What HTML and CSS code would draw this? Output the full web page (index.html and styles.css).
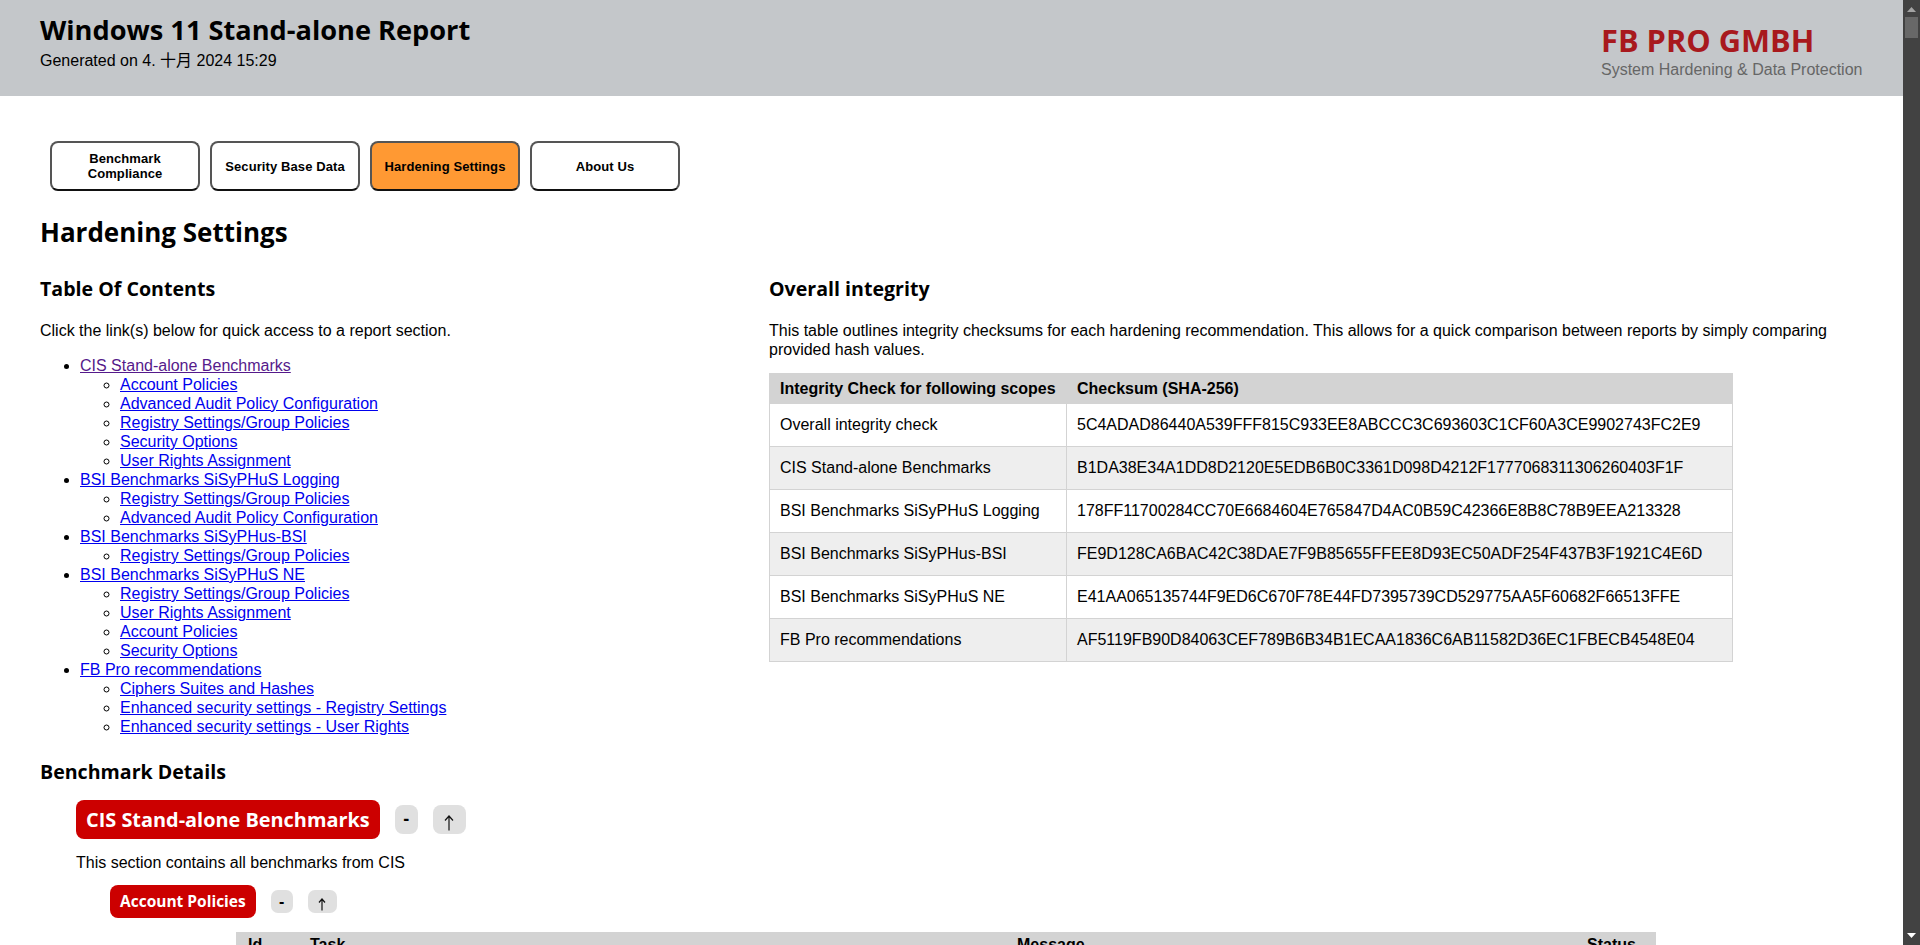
FILE: index.html
```html
<!DOCTYPE html>
<html lang="en">
<head>
<meta charset="utf-8">
<title>Windows 11 Stand-alone Report</title>
<link rel="stylesheet" href="styles.css">
</head>
<body>
<div class="page">
  <div class="viewport">
  <header class="banner">
    <div class="banner-left">
      <h1 class="report-title">Windows 11 Stand-alone Report</h1>
      <p class="report-date">Generated on 4. 十月 2024 15:29</p>
    </div>
    <div class="banner-right">
      <div class="brand">FB PRO GMBH</div>
      <div class="tagline">System Hardening &amp; Data Protection</div>
    </div>
  </header>
  <main class="content">
    <nav class="tabs">
      <a class="tab" href="#">Benchmark Compliance</a>
      <a class="tab" href="#">Security Base Data</a>
      <a class="tab tab-active" href="#">Hardening Settings</a>
      <a class="tab" href="#">About Us</a>
    </nav>
    <h1 class="page-title">Hardening Settings</h1>
    <div class="columns">
      <section class="col-left">
        <h2 class="sub-title">Table Of Contents</h2>
        <p class="intro">Click the link(s) below for quick access to a report section.</p>
        <ul class="toc">
          <li><a class="visited" href="#">CIS Stand-alone Benchmarks</a>
            <ul>
              <li><a href="#">Account Policies</a></li>
              <li><a href="#">Advanced Audit Policy Configuration</a></li>
              <li><a href="#">Registry Settings/Group Policies</a></li>
              <li><a href="#">Security Options</a></li>
              <li><a href="#">User Rights Assignment</a></li>
            </ul>
          </li>
          <li><a href="#">BSI Benchmarks SiSyPHuS Logging</a>
            <ul>
              <li><a href="#">Registry Settings/Group Policies</a></li>
              <li><a href="#">Advanced Audit Policy Configuration</a></li>
            </ul>
          </li>
          <li><a href="#">BSI Benchmarks SiSyPHus-BSI</a>
            <ul>
              <li><a href="#">Registry Settings/Group Policies</a></li>
            </ul>
          </li>
          <li><a href="#">BSI Benchmarks SiSyPHuS NE</a>
            <ul>
              <li><a href="#">Registry Settings/Group Policies</a></li>
              <li><a href="#">User Rights Assignment</a></li>
              <li><a href="#">Account Policies</a></li>
              <li><a href="#">Security Options</a></li>
            </ul>
          </li>
          <li><a href="#">FB Pro recommendations</a>
            <ul>
              <li><a href="#">Ciphers Suites and Hashes</a></li>
              <li><a href="#">Enhanced security settings - Registry Settings</a></li>
              <li><a href="#">Enhanced security settings - User Rights</a></li>
            </ul>
          </li>
        </ul>
      </section>
      <section class="col-right">
        <h2 class="sub-title">Overall integrity</h2>
        <p class="intro">This table outlines integrity checksums for each hardening recommendation. This allows for a quick comparison between reports by simply comparing provided hash values.</p>
        <table class="hash-table">
          <thead>
            <tr><th class="scope">Integrity Check for following scopes</th><th>Checksum (SHA-256)</th></tr>
          </thead>
          <tbody>
            <tr><td>Overall integrity check</td><td>5C4ADAD86440A539FFF815C933EE8ABCCC3C693603C1CF60A3CE9902743FC2E9</td></tr>
            <tr><td>CIS Stand-alone Benchmarks</td><td>B1DA38E34A1DD8D2120E5EDB6B0C3361D098D4212F1777068311306260403F1F</td></tr>
            <tr><td>BSI Benchmarks SiSyPHuS Logging</td><td>178FF11700284CC70E6684604E765847D4AC0B59C42366E8B8C78B9EEA213328</td></tr>
            <tr><td>BSI Benchmarks SiSyPHus-BSI</td><td>FE9D128CA6BAC42C38DAE7F9B85655FFEE8D93EC50ADF254F437B3F1921C4E6D</td></tr>
            <tr><td>BSI Benchmarks SiSyPHuS NE</td><td>E41AA065135744F9ED6C670F78E44FD7395739CD529775AA5F60682F66513FFE</td></tr>
            <tr><td>FB Pro recommendations</td><td>AF5119FB90D84063CEF789B6B34B1ECAA1836C6AB11582D36EC1FBECB4548E04</td></tr>
          </tbody>
        </table>
      </section>
    </div>
    <h2 class="details-title">Benchmark Details</h2>
    <div class="level-one">
      <div class="section-head">
        <h3 class="pill pill-large">CIS Stand-alone Benchmarks</h3>
        <button class="mini mini-large minus">-</button>
        <button class="mini mini-large arrow" aria-label="Up">
          <svg class="arrow-large" viewBox="0 0 10 16"><path d="M5 15.5V1M1 5.5 5 1l4 4.5"/></svg>
        </button>
      </div>
      <p class="section-note">This section contains all benchmarks from CIS</p>
      <div class="level-two">
        <div class="section-head">
          <h4 class="pill pill-small">Account Policies</h4>
          <button class="mini mini-small minus">-</button>
          <button class="mini mini-small arrow" aria-label="Up">
            <svg class="arrow-small" viewBox="0 0 8 13"><path d="M4 12.5V1M1 4.5 4 1l3 3.5"/></svg>
          </button>
        </div>
        <table class="result-table">
          <thead>
            <tr><th class="c-id">Id</th><th class="c-task">Task</th><th class="c-msg">Message</th><th>Status</th></tr>
          </thead>
        </table>
      </div>
    </div>
  </main>
  </div>
  <aside class="scrollbar" aria-hidden="true">
    <svg class="sb-arrow" viewBox="0 0 9 5"><path class="sb-up" d="M4.5 0 9 5H0z"/></svg>
    <div class="sb-thumb"></div>
    <svg class="sb-arrow sb-arrow-down" viewBox="0 0 9 5"><path class="sb-down" d="M0 0h9L4.5 5z"/></svg>
  </aside>
</div>
</body>
</html>
```
FILE: styles.css
```css
* { box-sizing: border-box; }
html, body { margin: 0; height: 100%; overflow: hidden; }
body { font-family: "Liberation Sans", Arial, "Noto Sans CJK SC", sans-serif; font-size: 16px; line-height: 19px; color: #000; background: #fff; }

.page { height: 100vh; display: flex; }
.viewport { flex: 1; min-width: 0; overflow: hidden; }

.scrollbar { flex: 0 0 17px; background: #424242; display: flex; flex-direction: column; align-items: center; padding: 7px 0; }
.sb-arrow { width: 9px; height: 5px; display: block; }
.sb-up { fill: #a3a3a3; }
.sb-down { fill: #fff; }
.sb-thumb { width: 13px; height: 21px; background: #686868; margin-top: 5px; }
.sb-arrow-down { margin-top: auto; }

.banner { height: 96px; background: #c4c7ca; display: flex; justify-content: space-between; padding: 0 40px; }
.report-title { margin: 13px 0 0; font-family: "Open Sans", sans-serif; font-size: 27.2px; line-height: 34px; font-weight: 700; }
.report-date { margin: 4px 0 0; font-size: 16px; }
.banner-right { width: 262px; padding-top: 22px; }
.brand { font-family: "Open Sans", sans-serif; font-size: 30.8px; line-height: 36px; font-weight: 700; color: #a8191d; }
.tagline { font-size: 16px; line-height: 19px; color: #666; margin-top: 2px; }

.content { padding: 45px 0 0 40px; }
.tabs { display: flex; gap: 10px; padding-left: 10px; }
.tab { width: 150px; height: 50px; display: flex; align-items: center; justify-content: center; text-align: center; border: 2px solid #555; border-bottom-color: #111; border-radius: 8px; color: #000; text-decoration: none; font-size: 13px; line-height: 15px; font-weight: bold; letter-spacing: .1px; padding: 0 8px; }
.tab-active { background: #f93; }

.page-title { margin: 25px 0 0; font-family: "Open Sans", sans-serif; font-size: 26px; line-height: 32px; font-weight: 700; }
.columns { display: flex; margin-top: 28px; }
.col-left { width: 729px; }
.col-right { flex: 0 0 auto; width: 1114px; }
.sub-title { margin: 0; font-family: "Open Sans", sans-serif; font-size: 19.6px; line-height: 26px; font-weight: 700; }
.intro { margin: 19px 0 0; font-size: 16px; }

.toc { margin: 16px 0 0; padding-left: 40px; }
.toc ul { margin: 0; padding-left: 40px; }
.toc a { color: #00e; }
.toc a.visited { color: #551a8b; }

.hash-table { margin-top: 14px; width: 964px; border-collapse: collapse; }
.hash-table th { background: #d3d3d3; text-align: left; height: 30px; padding: 0 10px; border: 1px solid #d3d3d3; font-weight: bold; }
.hash-table td { height: 43px; padding: 0 10px 2px; border: 1px solid #d3d3d3; }
.hash-table th.scope { width: 297px; }
.hash-table tbody tr:nth-child(even) td { background: #eee; }

.details-title { margin: 23px 0 0; font-family: "Open Sans", sans-serif; font-size: 19.6px; line-height: 26px; font-weight: 700; }
.level-one { padding-left: 36px; margin-top: 15px; }
.level-two { padding-left: 34px; margin-top: 13px; }
.section-head { display: flex; align-items: center; }
.pill { margin: 0; background: #c00; color: #fff; font-family: "Open Sans", sans-serif; font-weight: 700; border-radius: 8px; }
.pill-large { height: 39px; line-height: 39px; font-size: 19.9px; padding: 0 10px; }
.pill-small { height: 33px; line-height: 33px; font-size: 15.5px; padding: 0 10px; }
.section-note { margin: 14px 0 0; }
.mini { border: 0; padding: 0; background: #e0e0e0; color: #000; font-family: "Liberation Sans", sans-serif; display: block; }
.minus { font-weight: bold; }
.arrow { display: flex; justify-content: center; }
.arrow svg { display: block; fill: none; stroke: #111; stroke-width: 1.2; }
.arrow-large { width: 10px; height: 16px; margin-top: 10px; }
.arrow-small { width: 8px; height: 13px; margin-top: 8px; }
.mini-large { height: 29px; font-size: 18px; border-radius: 8px; margin-left: 15px; }
.mini-large.minus { width: 23px; }
.mini-large.arrow { width: 33px; }
.mini-small { height: 23px; font-size: 16px; border-radius: 7px; margin-left: 15px; }
.mini-small.minus { width: 22px; }
.mini-small.arrow { width: 29px; }

.result-table { margin: 14px 0 0 126px; width: 1420px; border-collapse: collapse; }
.result-table th { background: #d3d3d3; text-align: left; vertical-align: top; height: 30px; padding: 3px 12px 0; font-weight: bold; }
.c-id { width: 62px; }
.c-task { width: 707px; }
.c-msg { width: 570px; }
```
